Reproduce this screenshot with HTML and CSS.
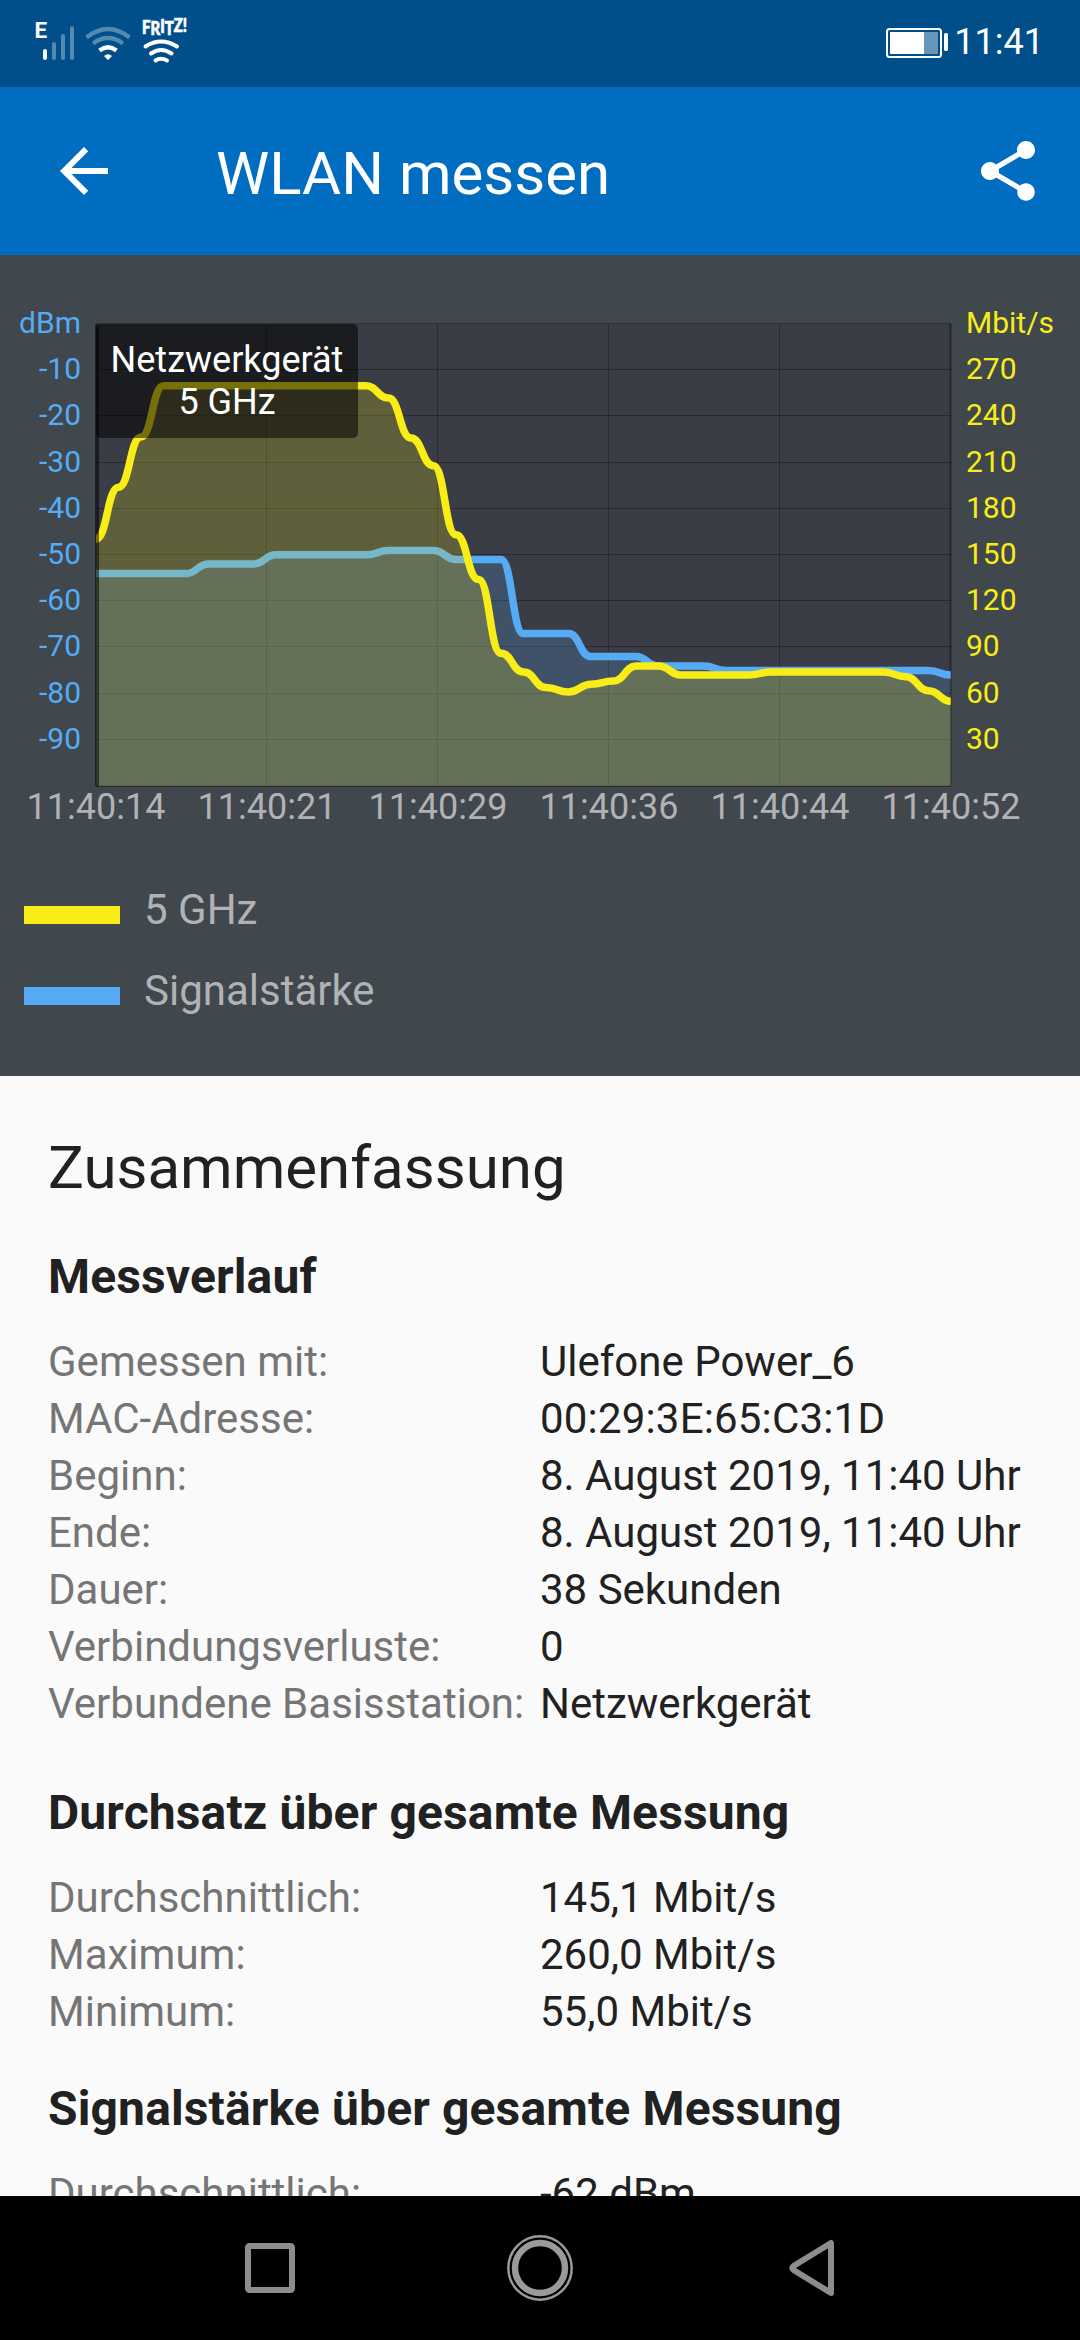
FILE: index.html
```html
<!DOCTYPE html>
<html lang="de">
<head>
<meta charset="utf-8">
<title>WLAN messen</title>
<link rel="stylesheet" href="styles.css">
</head>
<body>
<div class="screen">
  <div class="status">
    <svg class="status-icons" width="200" height="87" viewBox="0 0 200 87" fill="none" stroke-linecap="round">
      <text class="net" x="34.500" y="38">E</text>
      <g stroke="#fff" stroke-width="4">
        <path d="M45 51V58"/>
        <path d="M54 44V58M63 36V58M72 28V58" opacity=".33"/>
      </g>
      <g stroke="#fff" stroke-width="4.200" stroke-linecap="butt">
        <path d="M86.500 37.500Q108 20.500 129.500 37.500M93 43.500Q108 32.500 123 43.500" opacity=".33"/>
        <path d="M99.500 50.500Q108 44 116.500 50.500"/>
      </g>
      <path d="M104 56Q108 52.500 112 56L108 60Z" fill="#fff"/>
      <text class="fritz" x="142" y="34" textLength="45" lengthAdjust="spacingAndGlyphs">F<tspan dy="1">R</tspan><tspan dy="-2">I</tspan><tspan dy="2">T</tspan><tspan dy="-3">Z</tspan>!</text>
      <g stroke="#fff" stroke-width="4">
        <path d="M145.500 46.500Q161 36.500 177 46.500M151 53.500Q161 46.500 171.500 53.500M155.500 60.500Q161 57 167 60.500"/>
      </g>
    </svg>
    <div class="status-right">
      <svg width="64" height="31" viewBox="0 0 64 31">
        <rect x="1" y="1" width="54" height="28" rx="2.500" fill="none" stroke="#fff" stroke-width="2"/>
        <rect x="4" y="4" width="34" height="22" fill="#fff"/>
        <rect x="38" y="4" width="14" height="22" fill="#fff" opacity=".4"/>
        <rect x="58" y="5" width="4" height="18" rx="1.500" fill="#fff"/>
      </svg>
      <span class="clock">11:41</span>
    </div>
  </div>
  <header class="bar">
    <svg class="icon" viewBox="0 0 24 24"><path d="M20 11H7.830l5.590-5.590L12 4l-8 8 8 8 1.410-1.410L7.830 13H20v-2z"/></svg>
    <h1>WLAN messen</h1>
    <svg class="icon" viewBox="0 0 24 24"><path d="M18 16.080c-.76 0-1.440.3-1.960.77L8.910 12.700c.05-.23.09-.46.09-.7s-.04-.47-.09-.7l7.050-4.110c.54.5 1.250.81 2.040.81 1.660 0 3-1.340 3-3s-1.340-3-3-3-3 1.340-3 3c0 .24.04.47.09.7L8.040 9.810C7.500 9.310 6.790 9 6 9c-1.660 0-3 1.340-3 3s1.340 3 3 3c.79 0 1.500-.31 2.040-.81l7.120 4.160c-.05.21-.08.43-.08.65 0 1.610 1.310 2.920 2.920 2.920s2.920-1.310 2.920-2.920-1.310-2.920-2.920-2.920z"/></svg>
  </header>
  <section class="chart">
    <svg id="plot" width="1080" height="600" viewBox="0 255 1080 600"></svg>
    <ul class="legend">
      <li><i class="swatch yellow"></i>5 GHz</li>
      <li><i class="swatch blue"></i>Signalstärke</li>
    </ul>
  </section>
  <main class="summary">
    <h2>Zusammenfassung</h2>
    <h3 class="history">Messverlauf</h3>
    <dl>
      <dt>Gemessen mit:</dt><dd>Ulefone Power_6</dd>
      <dt>MAC-Adresse:</dt><dd class="mac">00:29:3E:65:C3:1D</dd>
      <dt>Beginn:</dt><dd>8. August 2019, 11:40 Uhr</dd>
      <dt>Ende:</dt><dd>8. August 2019, 11:40 Uhr</dd>
      <dt>Dauer:</dt><dd>38 Sekunden</dd>
      <dt>Verbindungsverluste:</dt><dd>0</dd>
      <dt>Verbundene Basisstation:</dt><dd>Netzwerkgerät</dd>
    </dl>
    <h3 class="throughput">Durchsatz über gesamte Messung</h3>
    <dl>
      <dt>Durchschnittlich:</dt><dd>145,1 Mbit/s</dd>
      <dt>Maximum:</dt><dd>260,0 Mbit/s</dd>
      <dt>Minimum:</dt><dd>55,0 Mbit/s</dd>
    </dl>
    <h3 class="strength">Signalstärke über gesamte Messung</h3>
    <dl>
      <dt>Durchschnittlich:</dt><dd>-62 dBm</dd>
    </dl>
  </main>
  <nav class="nav">
    <svg width="72" height="72" viewBox="0 0 72 72"><rect x="14" y="14" width="44" height="44" rx="1.500" stroke="#8c8c8c" stroke-width="6"/></svg>
    <svg width="72" height="72" viewBox="0 0 72 72" stroke="#9a9a9a"><circle cx="36" cy="36" r="31.700" stroke-width="2.500"/><circle cx="36" cy="36" r="25" stroke-width="6.500"/></svg>
    <svg width="72" height="72" viewBox="0 0 72 72"><path d="M57 11V61L19.500 38Q17 36 19.500 34Z" stroke="#8c8c8c" stroke-width="6" stroke-linejoin="round"/></svg>
  </nav>
</div>
<script src="chart.js"></script>
</body>
</html>
```
FILE: styles.css
```css
* { box-sizing: border-box; margin: 0; padding: 0; }
body { font-family: Roboto, sans-serif; background: #000; }
.screen { width: 1080px; height: 2340px; display: flex; flex-direction: column; overflow: hidden; }

.status { height: 87px; flex: none; background: #004f8b; display: flex; justify-content: space-between; }
.status-icons { display: block; }
.net { font: 700 22.5px Roboto, sans-serif; fill: #fff; }
.fritz { font: 900 18px Lato, sans-serif; fill: #fff; stroke: #fff; stroke-width: .7; }
.status-right { display: flex; align-items: flex-start; padding-right: 36px; color: #fff; }
.status-right svg { margin: 28px 4px 0 0; }
.clock { font-size: 36px; line-height: 85px; }

.bar { height: 168px; flex: none; background: #006dc1; color: #fff; display: flex; align-items: center; padding: 0 36px 0 48px; }
.icon { width: 72px; height: 72px; fill: #fff; }
.bar h1 { flex: 1; margin-left: 96px; font-size: 60px; font-weight: 400; line-height: 72px; padding-top: 5px; }

.chart { height: 821px; flex: none; background: #40474d; }
.chart svg { display: block; }
.axis { font-size: 30px; }
.left { fill: #55acf4; text-anchor: end; }
.right { fill: #f8ed17; }
.time { font-size: 36px; fill: #b2b2b4; text-anchor: middle; }
.tip { font-size: 36px; fill: #fff; text-anchor: middle; }
.grid { stroke: #000; stroke-opacity: .3; stroke-width: 1; fill: none; }
.line { fill: none; stroke-width: 7.5; }

.legend { list-style: none; padding: 30px 24px 0; }
.legend li { display: flex; align-items: center; height: 50px; margin-bottom: 31px; font-size: 42px; line-height: 50px; color: #b0b2b4; }
.swatch { width: 96px; height: 18px; margin: 10px 24px 0 0; }
.yellow { background: #f8ed17; }
.blue { background: #55acf4; }

.summary { flex: 1; min-height: 0; overflow: hidden; background: #fafafa; color: #212121; padding: 55px 48px 0; }
.summary h2 { font-size: 60px; font-weight: 400; line-height: 74px; }
.summary h3 { font-size: 48px; font-weight: 700; line-height: 57px; letter-spacing: .14px; margin-bottom: 28px; }
.history { margin-top: 43px; }
.throughput { margin-top: 52px; }
.strength { margin-top: 40px; }
.summary dl { display: grid; grid-template-columns: 492px 1fr; grid-auto-rows: 57px; font-size: 42px; line-height: 57px; white-space: nowrap; }
.summary dt { color: #757575; }
.mac { letter-spacing: .18px; }

.nav { height: 144px; flex: none; background: #000; display: flex; justify-content: space-between; align-items: center; padding: 0 234px; }
.nav svg { fill: none; }
```
FILE: chart.js
```js
// One sample per second, 22.5px apart, as vertical plot positions.
const X0 = 96, STEP = 22.5, TOP = 324, BOTTOM = 786;
const rep = (v, n) => Array(n).fill(v);
const rate = [539, 487.3, 437, ...rep(385.7, 10), 398, 438, 465.7, 534.7, 579.5, 653.3, 672,
  687.5, 692, 684.3, 681, 666, 666, ...rep(675, 4), ...rep(672, 6), 676.7, 690.7, 701.3];
const signal = [...rep(573.5, 5), ...rep(564, 3), ...rep(554.8, 5), ...rep(550.6, 3),
  ...rep(559.4, 3), ...rep(633.6, 3), ...rep(656.6, 3), ...rep(666, 3), ...rep(670.4, 10), 675];

function curve(ys) {
  let d = `M${X0} ${ys[0]}`;
  for (let i = 1; i < ys.length; i++) {
    const x = X0 + i * STEP, m = x - STEP / 2;
    d += `C${m} ${ys[i - 1]} ${m} ${ys[i]} ${x} ${ys[i]}`;
  }
  return d;
}
const area = (ys, color) =>
  `<path d="${curve(ys)}V${BOTTOM}H${X0}Z" fill="${color}" fill-opacity=".2"/>` +
  `<path class="line" d="${curve(ys)}" stroke="${color}"/>`;

let s = `<defs><clipPath id="c"><rect x="96" y="324" width="855" height="462"/></clipPath></defs>
<rect x="96" y="324" width="855" height="462" fill="#3a3d45"/>`;
let grid = '';
for (let i = 0; i <= 10; i++) grid += `M96 ${Math.round(TOP + i * 46.2) - 0.5}H951`;
for (let i = 1; i < 5; i++) grid += `M${Math.floor(X0 + i * 171) - 0.5} 324V786`;
s += `<path class="grid" d="${grid}M950 324V786"/>`;
s += `<g clip-path="url(#c)">${area(signal, '#55acf4')}${area(rate, '#f8ed17')}</g>`;
s += `<path d="M95 324H99V786H95Z" fill="#000" fill-opacity=".53"/>
<path d="M951 324V786M96 786.500H951" stroke="#000" stroke-opacity=".4"/>
<rect x="96" y="324" width="262" height="114" rx="5" fill="#000" fill-opacity=".53"/>
<text class="tip" x="227" y="372">Netzwerkgerät</text><text class="tip" x="227" y="414">5 GHz</text>`;
for (let i = 0; i < 10; i++) {
  const y = Math.round(333 + i * 46.2);
  s += `<text class="axis left" x="81" y="${y}">${i ? -10 * i : 'dBm'}</text>`;
  s += `<text class="axis right" x="966" y="${y}">${i ? 300 - 30 * i : 'Mbit/s'}</text>`;
}
['14', '21', '29', '36', '44', '52'].forEach((t, i) => {
  s += `<text class="time" x="${X0 + i * 171}" y="819">11:40:${t}</text>`;
});
document.getElementById('plot').innerHTML = s;
```
